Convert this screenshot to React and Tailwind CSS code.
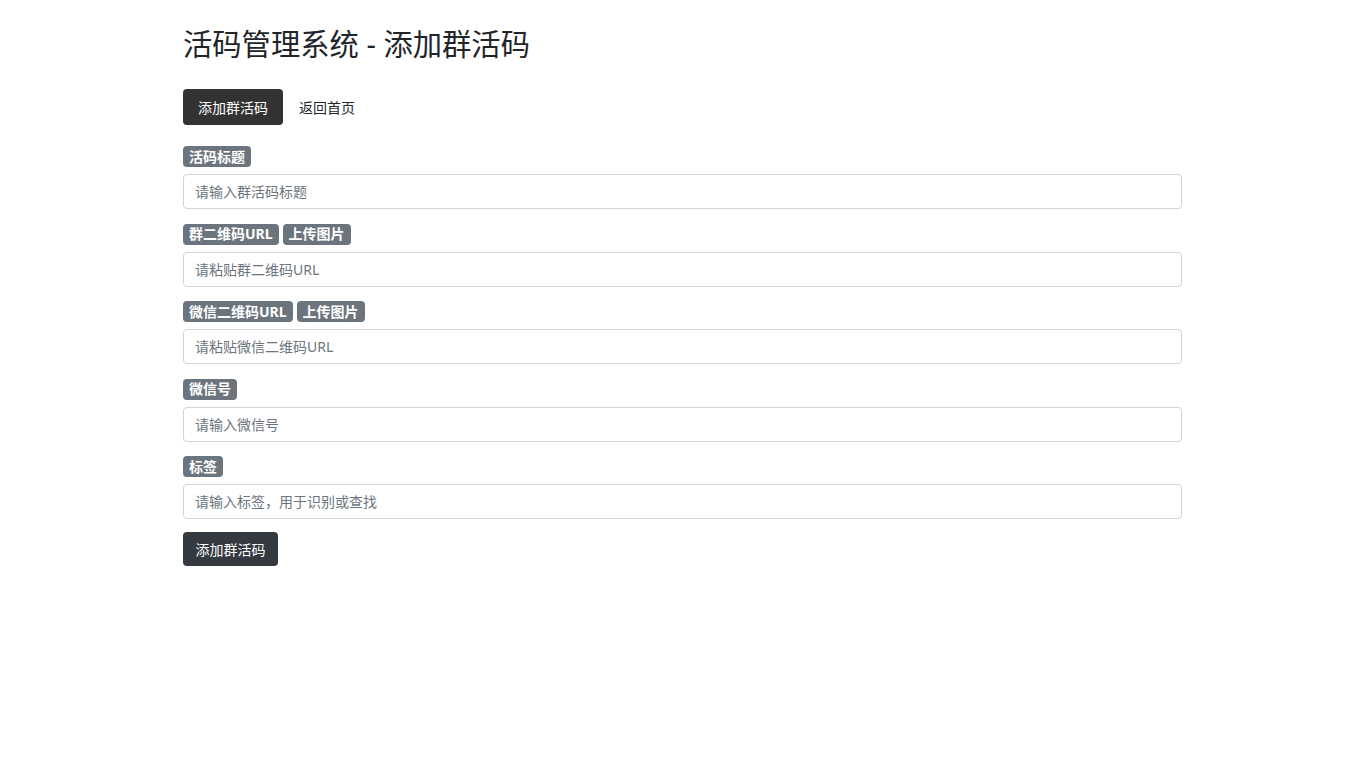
import React from 'react';

const font = { fontFamily: '"Noto Sans", "Noto Sans CJK SC", sans-serif' };

function Badge({ children }) {
  return (
    <span className="inline-flex items-center h-[21px] px-[6px] rounded-[4px] bg-[#6c757d] text-white text-[14px] font-bold leading-none">
      {children}
    </span>
  );
}

function Field({ labels, placeholder, last }) {
  return (
    <div className={last ? 'mb-[13px]' : 'mb-[14.5px]'}>
      <div className="flex gap-[4px] mb-[7px]">
        {labels.map((l) => (
          <Badge key={l}>{l}</Badge>
        ))}
      </div>
      <input
        type="text"
        placeholder={placeholder}
        className="block w-full h-[35px] px-[11px] border border-[#ced4da] rounded-[4px] text-[14px] text-[#495057] placeholder:text-[#6c757d] outline-none"
      />
    </div>
  );
}

export default function App() {
  return (
    <div className="min-h-screen bg-white text-[#212529]" style={font}>
      <div className="ml-[183px] w-[999px] pt-[24px]">
        <h1 className="text-[29.3px] leading-[40px] font-normal">活码管理系统 - 添加群活码</h1>

        <nav className="flex items-center gap-[1px] mt-[25px] mb-[21px]">
          <a className="h-[36px] px-[15px] flex items-center rounded-[4px] bg-[#333333] text-white text-[14px]">添加群活码</a>
          <a className="h-[36px] px-[15px] flex items-center text-[14px] text-[#212529]">返回首页</a>
        </nav>

        <form onSubmit={(e) => e.preventDefault()}>
          <Field labels={['活码标题']} placeholder="请输入群活码标题" />
          <Field labels={['群二维码URL', '上传图片']} placeholder="请粘贴群二维码URL" />
          <Field labels={['微信二维码URL', '上传图片']} placeholder="请粘贴微信二维码URL" />
          <Field labels={['微信号']} placeholder="请输入微信号" />
          <Field labels={['标签']} placeholder="请输入标签，用于识别或查找" last />
          <button type="submit" className="h-[34px] px-[12.5px] rounded-[4px] bg-[#343a40] text-white text-[14px]">
            添加群活码
          </button>
        </form>
      </div>
    </div>
  );
}
